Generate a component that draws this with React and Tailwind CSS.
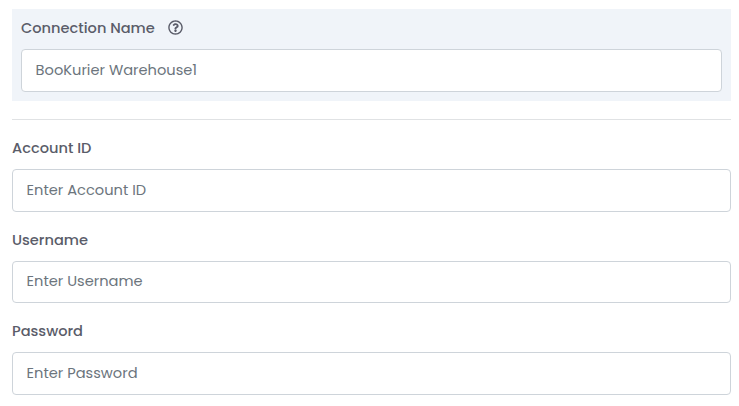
import { FaRegQuestionCircle } from "react-icons/fa";

const fields = [
  {
    id: "account",
    label: "Account ID",
    placeholder: "Enter Account ID",
    inputClass: "h-[43px]",
  },
  {
    id: "username",
    label: "Username",
    placeholder: "Enter Username",
    inputClass: "h-[42px] pb-[2px]",
  },
  {
    id: "password",
    label: "Password",
    placeholder: "Enter Password",
    inputClass: "h-[43px]",
  },
];

const inputBase =
  "block w-full rounded-[4px] border border-[#ced4da] bg-white px-[13.6px] text-[14.64px] text-[#6c757d] outline-none placeholder:text-[#6c757d] placeholder:opacity-100";

export default function App() {
  return (
    <form className="h-[406px] w-full overflow-hidden bg-white pt-[9px] pr-[8px] pl-[12px] font-['Poppins','Inter',sans-serif] text-[#5a5c69]">
      <div className="h-[92px] bg-[#f0f4f9] px-[9px] pt-[8px]">
        <div className="flex h-[22px] items-center">
          <label
            htmlFor="connection"
            className="pt-px text-[14.6px] font-medium"
          >
            Connection Name
          </label>
          <FaRegQuestionCircle className="mb-[2px] ml-[13px] size-[15px]" />
        </div>
        <input
          id="connection"
          className={`${inputBase} mt-[10px] h-[43px]`}
          placeholder="BooKurier Warehouse1"
        />
      </div>
      <hr className="mt-[18px] border-[#e0e2e4]" />
      {fields.map((f) => (
        <div key={f.id} className="mt-[16px]">
          <label
            htmlFor={f.id}
            className="block h-[24px] text-[14.6px] leading-[24px] font-medium"
          >
            {f.label}
          </label>
          <input
            id={f.id}
            className={`${inputBase} mt-[9px] ${f.inputClass}`}
            placeholder={f.placeholder}
          />
        </div>
      ))}
    </form>
  );
}
